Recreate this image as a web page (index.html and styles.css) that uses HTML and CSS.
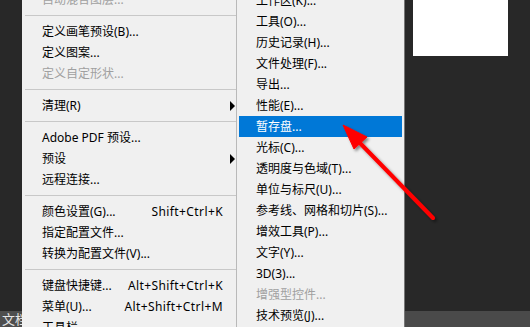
FILE: index.html
```html
<!DOCTYPE html>
<html lang="zh-CN">
<head>
    <meta charset="UTF-8">
    <meta name="viewport" content="width=device-width, initial-scale=1.0">
    <title>编辑 - 首选项</title>
    <link rel="stylesheet" href="styles.css">
</head>
<body>
    <div class="workspace">
        <div class="side">
            <div class="side-fill"></div>
            <div class="doc-tab">文档</div>
        </div>

        <!-- 编辑菜单 -->
        <div class="menu">
            <div class="item disabled"><span class="label">自动混合图层...</span></div>
            <div class="sep"></div>
            <div class="item"><span class="label">定义画笔预设(B)...</span></div>
            <div class="item"><span class="label">定义图案...</span></div>
            <div class="item disabled"><span class="label">定义自定形状...</span></div>
            <div class="sep"></div>
            <div class="item"><span class="label">清理(R)</span><span class="arrow"></span></div>
            <div class="sep"></div>
            <div class="item"><span class="label">Adobe PDF 预设...</span></div>
            <div class="item"><span class="label">预设</span><span class="arrow"></span></div>
            <div class="item"><span class="label">远程连接...</span></div>
            <div class="sep"></div>
            <div class="item"><span class="label">颜色设置(G)...</span><span class="key">Shift+Ctrl+K</span></div>
            <div class="item"><span class="label">指定配置文件...</span></div>
            <div class="item"><span class="label">转换为配置文件(V)...</span></div>
            <div class="sep"></div>
            <div class="item"><span class="label">键盘快捷键...</span><span class="key">Alt+Shift+Ctrl+K</span></div>
            <div class="item"><span class="label">菜单(U)...</span><span class="key">Alt+Shift+Ctrl+M</span></div>
            <div class="item"><span class="label">工具栏</span></div>
        </div>

        <!-- 首选项子菜单 -->
        <div class="submenu">
            <div class="item"><span class="label">工作区(K)...</span></div>
            <div class="item"><span class="label">工具(O)...</span></div>
            <div class="item"><span class="label">历史记录(H)...</span></div>
            <div class="item"><span class="label">文件处理(F)...</span></div>
            <div class="item"><span class="label">导出...</span></div>
            <div class="item"><span class="label">性能(E)...</span></div>
            <div class="item active"><span class="label">暂存盘...</span></div>
            <div class="item"><span class="label">光标(C)...</span></div>
            <div class="item"><span class="label">透明度与色域(T)...</span></div>
            <div class="item"><span class="label">单位与标尺(U)...</span></div>
            <div class="item"><span class="label">参考线、网格和切片(S)...</span></div>
            <div class="item"><span class="label">增效工具(P)...</span></div>
            <div class="item"><span class="label">文字(Y)...</span></div>
            <div class="item"><span class="label">3D(3)...</span></div>
            <div class="item disabled"><span class="label">增强型控件...</span></div>
            <div class="item"><span class="label">技术预览(J)...</span></div>
        </div>

        <div class="canvas">
            <div class="paper"></div>
            <div class="canvas-fill"></div>
            <div class="status"></div>
        </div>
    </div>

    <svg class="pointer" width="530" height="327" viewBox="0 0 530 327">
        <defs>
            <filter id="shadow" x="-20%" y="-20%" width="140%" height="140%">
                <feDropShadow dx="2" dy="2" stdDeviation="1.6" flood-color="#000" flood-opacity="0.45"/>
            </filter>
        </defs>
        <g filter="url(#shadow)" fill="#ff0000" stroke="#ff0000">
            <line x1="358" y1="141" x2="433" y2="218" stroke-width="4" stroke-linecap="round"/>
            <polygon points="343,125 367,137 354,149" stroke-width="1" stroke-linejoin="round"/>
        </g>
    </svg>
</body>
</html>
```

FILE: styles.css
```css
body {
    margin: 0;
    background: #282828;
    font-family: "Noto Sans", "Noto Sans CJK SC", sans-serif;
    font-size: 12px;
    overflow: hidden;
}
.workspace {
    display: flex;
    height: 327px;
    overflow: hidden;
}
.side {
    width: 22px;
    display: flex;
    flex-direction: column;
    overflow: hidden;
}
.side-fill {
    flex: 1;
}
.doc-tab {
    height: 16px;
    background: #4e4e4e;
    color: #e6e6e6;
    font-size: 13px;
    line-height: 16px;
    padding-left: 2px;
    white-space: nowrap;
}
.menu {
    width: 214px;
    background: #f0f0f0;
    border-right: 1px solid #b9b9b9;
    margin-top: -11px;
}
.submenu {
    width: 163px;
    background: #f0f0f0;
    border-right: 1px solid #777;
    padding: 0 2px;
    margin-top: -10px;
}
.item {
    display: flex;
    align-items: center;
    height: 21px;
    line-height: 1;
    color: #000;
    white-space: nowrap;
}
.menu .item {
    padding-left: 20px;
}
.submenu .item {
    padding-left: 17px;
}
.item .label {
    flex: 1;
}
.item.disabled {
    color: #a0a0a0;
}
.item.active {
    background: #0078d7;
    color: #fff;
}
.key {
    margin-right: 13px;
    letter-spacing: 0.4px;
}
.arrow {
    width: 0;
    height: 0;
    border-left: 5px solid #000;
    border-top: 5px solid transparent;
    border-bottom: 5px solid transparent;
    margin-right: 1px;
}
.sep {
    height: 11px;
    display: flex;
    align-items: center;
    margin-left: 3px;
}
.sep::after {
    content: "";
    flex: 1;
    height: 1px;
    background: #c8c8c8;
}
.canvas {
    flex: 1;
    display: flex;
    flex-direction: column;
}
.paper {
    width: 95px;
    height: 56px;
    margin-left: 8px;
    background: #fff;
}
.canvas-fill {
    flex: 1;
}
.status {
    height: 16px;
    background: #4a4a4a;
}
.pointer {
    position: absolute;
    top: 0;
    left: 0;
    pointer-events: none;
}
```
